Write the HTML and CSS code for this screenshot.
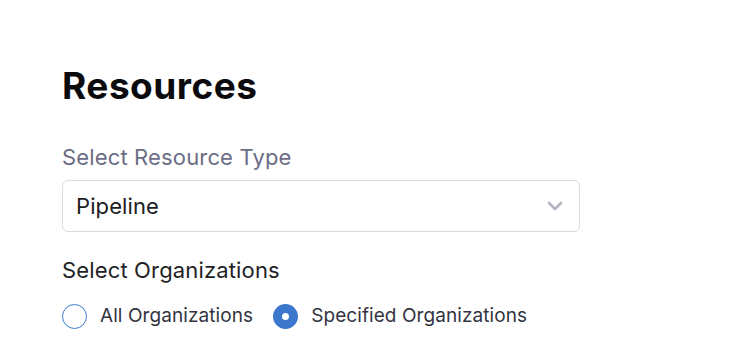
FILE: index.html
```html
<!DOCTYPE html>
<html lang="en">
  <head>
    <meta charset="UTF-8" />
    <title>Resources</title>
    <link rel="stylesheet" href="styles.css">
  </head>
  <body>
    <div class="panel">
      <h2>Resources</h2>

      <label class="field-label" for="resourceType">Select Resource Type</label>
      <div class="select">
        <span id="resourceType">Pipeline</span>
        <svg class="chevron" width="16" height="10" viewBox="0 0 16 10">
          <path d="M2 2 L8 8 L14 2" fill="none" stroke="#b3b3c3" stroke-width="2.6" stroke-linecap="round" stroke-linejoin="round" />
        </svg>
      </div>

      <div class="group-label">Select Organizations</div>
      <div class="radios">
        <label class="radio">
          <span class="dot"></span>
          All Organizations
        </label>
        <label class="radio">
          <span class="dot checked"></span>
          Specified Organizations
        </label>
      </div>
    </div>
  </body>
</html>
```

FILE: styles.css
```css
body {
  font-family: Inter, "Noto Sans", sans-serif;
  background: #fff;
  margin: 0;
  color: #22222a;
}
.panel {
  padding: 64px 62px 0;
  width: 518px;
}
h2 {
  margin: 0;
  font-size: 37px;
  font-weight: 700;
  letter-spacing: 0.5px;
  color: #0b0b0d;
  line-height: 44px;
}
.field-label {
  display: block;
  margin-top: 35px;
  font-size: 22px;
  letter-spacing: 0.15px;
  color: #6b6d85;
  line-height: 28px;
}
.select {
  margin-top: 9px;
  height: 52px;
  box-sizing: border-box;
  border: 1px solid #d9dae5;
  border-radius: 6px;
  display: flex;
  align-items: center;
  justify-content: space-between;
  padding: 0 16px 0 13px;
  font-size: 22px;
  letter-spacing: 0.1px;
  color: #1c1c24;
}
.chevron {
  display: block;
}
.group-label {
  margin-top: 24px;
  font-size: 22px;
  letter-spacing: 0.15px;
  line-height: 28px;
  color: #1f1f26;
}
.radios {
  display: flex;
  gap: 20px;
  margin-top: 18px;
}
.radio {
  display: flex;
  align-items: center;
  gap: 13px;
  font-size: 19px;
  letter-spacing: 0.08px;
  line-height: 28px;
  color: #33343f;
}
.dot {
  width: 25px;
  height: 25px;
  box-sizing: border-box;
  border-radius: 50%;
  border: 1.5px solid #3b7bd4;
}
.dot.checked {
  border: 9px solid #3b77cc;
}
```
